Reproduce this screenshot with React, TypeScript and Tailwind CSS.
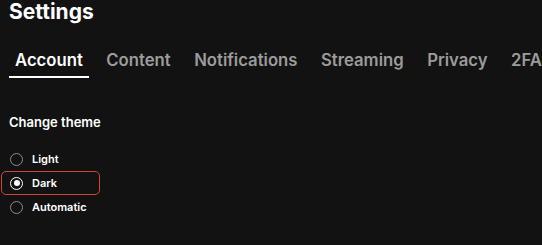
import React from "react";

const tabs = ["Account", "Content", "Notifications", "Streaming", "Privacy", "2FA"];
const options = ["Light", "Dark", "Automatic"];

export default function App() {
  return (
    <div
      className="w-[542px] h-[245px] overflow-hidden bg-[#121212] text-white"
      style={{ fontFamily: "Inter, 'Liberation Sans', sans-serif" }}
    >
      <div className="pl-[9px]">
        <h1 className="text-[21px] leading-[24px] font-bold">Settings</h1>
        <div className="mt-[16px] flex gap-[11.5px] whitespace-nowrap">
          {tabs.map((t, i) => (
            <div
              key={t}
              className={
                "px-[6px] pt-[8px] pb-[4px] text-[16.7px] leading-[24px] font-semibold border-b-2 " +
                (i === 0 ? "text-white border-white" : "text-[#9c9c9c] border-transparent")
              }
            >
              {t}
            </div>
          ))}
        </div>
        <div className="mt-[36px] text-[13px] leading-[16px] font-semibold">Change theme</div>
      </div>
      <div className="mt-[17px] ml-[1px] flex flex-col">
        {options.map((o) => {
          const checked = o === "Dark";
          return (
            <div
              key={o}
              className={
                "w-[99px] h-[24px] flex items-center pl-[8px] gap-[9px] rounded-[5px] border-[1.5px] " +
                (checked ? "border-[#d0453a]" : "border-transparent")
              }
            >
              <span
                className={
                  "w-[13px] h-[13px] rounded-full flex items-center justify-center border-[1.5px] " +
                  (checked ? "border-white" : "border-[#8a8a8a]")
                }
              >
                {checked && <span className="w-[6px] h-[6px] rounded-full bg-white" />}
              </span>
              <span className="text-[11px] leading-[14px] font-semibold">{o}</span>
            </div>
          );
        })}
      </div>
    </div>
  );
}
